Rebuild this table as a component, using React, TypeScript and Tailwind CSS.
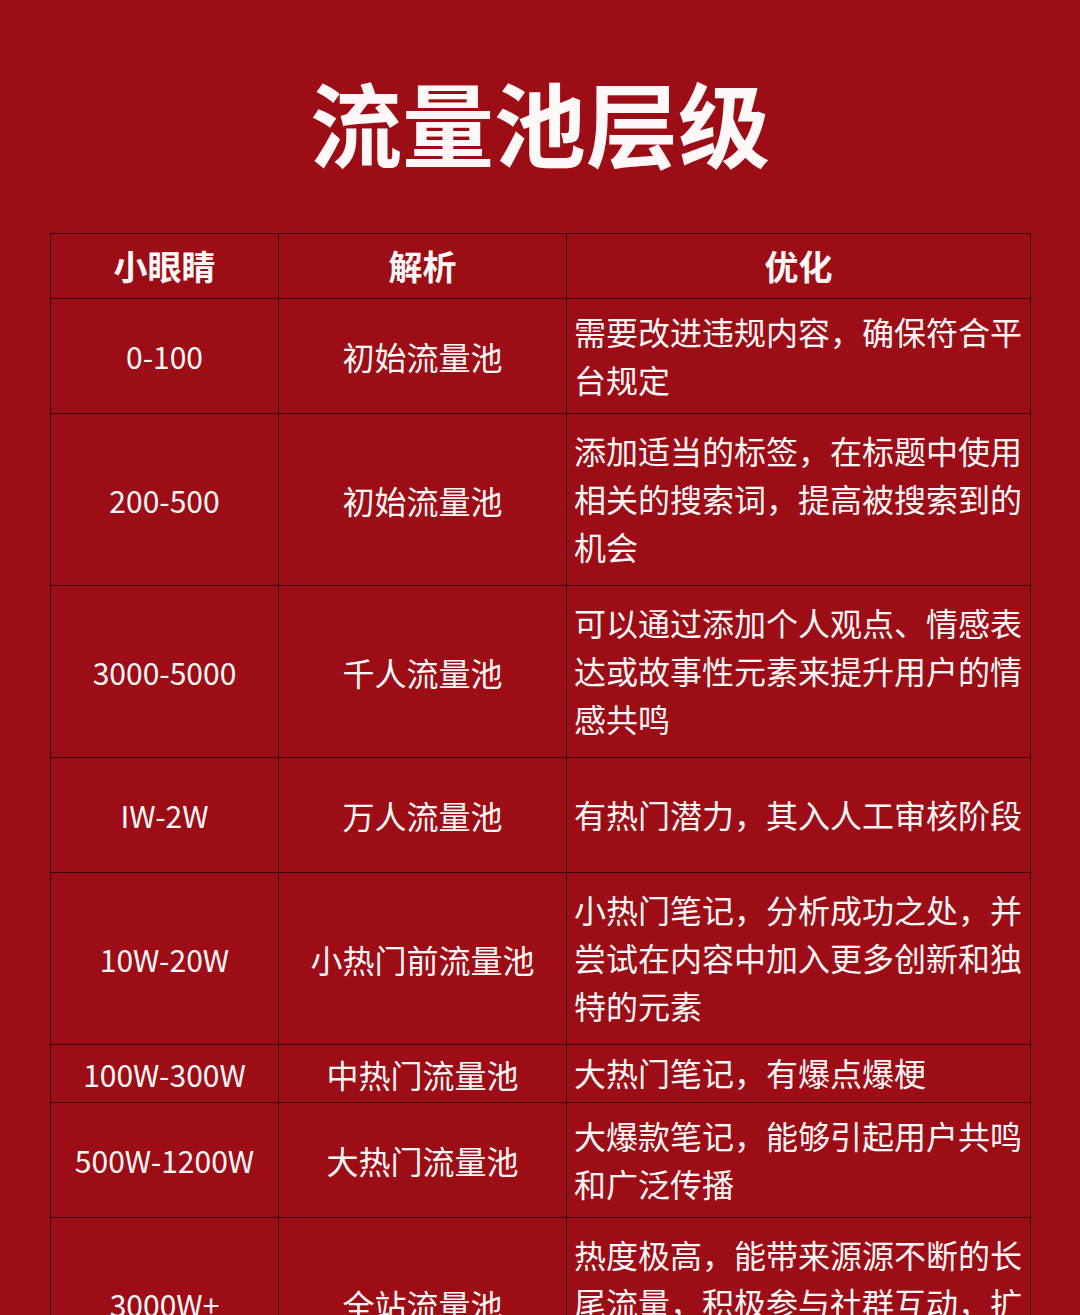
const rows = [
  { views: "0-100", pool: "初始流量池", tip: "需要改进违规内容，确保符合平台规定", h: "h-[115px]" },
  { views: "200-500", pool: "初始流量池", tip: "添加适当的标签，在标题中使用相关的搜索词，提高被搜索到的机会", h: "h-[172px]" },
  { views: "3000-5000", pool: "千人流量池", tip: "可以通过添加个人观点、情感表达或故事性元素来提升用户的情感共鸣", h: "h-[172px]" },
  { views: "IW-2W", pool: "万人流量池", tip: "有热门潜力，其入人工审核阶段", h: "h-[115px]" },
  { views: "10W-20W", pool: "小热门前流量池", tip: "小热门笔记，分析成功之处，并尝试在内容中加入更多创新和独特的元素", h: "h-[172px]" },
  { views: "100W-300W", pool: "中热门流量池", tip: "大热门笔记，有爆点爆梗", h: "h-[58px]" },
  { views: "500W-1200W", pool: "大热门流量池", tip: "大爆款笔记，能够引起用户共鸣和广泛传播", h: "h-[115px]" },
  { views: "3000W+", pool: "全站流量池", tip: "热度极高，能带来源源不断的长尾流量，积极参与社群互动，扩大影响力", h: "h-[172px]" },
];

export default function App() {
  return (
    <div className="min-h-screen bg-[#9d0d16] text-[#fff8f8] font-['Noto_Sans_CJK_SC','Noto_Sans',sans-serif] pb-16">
      <h1 className="pt-[75px] text-center text-[92px] leading-none font-bold">
        流量池层级
      </h1>

      <table className="mt-[66px] mx-[50px] w-[980px] table-fixed border-collapse">
        <colgroup>
          <col className="w-[228px]" />
          <col className="w-[288px]" />
          <col className="w-[464px]" />
        </colgroup>
        <thead>
          <tr className="h-[65px]">
            <th className="border border-[#3a0609] text-[34px] leading-[48px] font-bold">小眼睛</th>
            <th className="border border-[#3a0609] text-[34px] leading-[48px] font-bold">解析</th>
            <th className="border border-[#3a0609] text-[34px] leading-[48px] font-bold">优化</th>
          </tr>
        </thead>
        <tbody>
          {rows.map((r) => (
            <tr key={r.views} className={r.h}>
              <td className="border border-[#3a0609] text-center text-[30px] leading-[48px]">{r.views}</td>
              <td className="border border-[#3a0609] text-center text-[32px] leading-[48px]">{r.pool}</td>
              <td className="border border-[#3a0609] pl-[7px] pr-[4px] pb-[3px] text-left text-[32px] leading-[48px]">
                {r.tip}
              </td>
            </tr>
          ))}
        </tbody>
      </table>
    </div>
  );
}
